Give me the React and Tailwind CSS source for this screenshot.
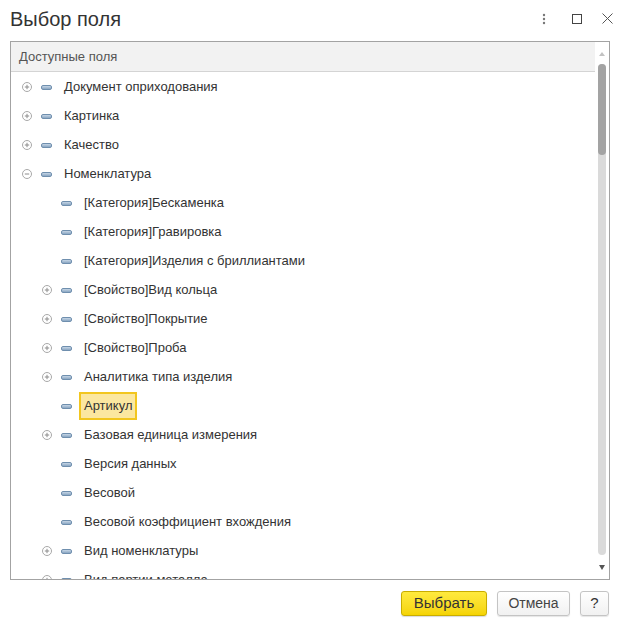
import React from "react";

const rows = [
  { level: 0, label: "Документ оприходования", toggle: "plus" },
  { level: 0, label: "Картинка", toggle: "plus" },
  { level: 0, label: "Качество", toggle: "plus" },
  { level: 0, label: "Номенклатура", toggle: "minus" },
  { level: 1, label: "[Категория]Бескаменка" },
  { level: 1, label: "[Категория]Гравировка" },
  { level: 1, label: "[Категория]Изделия с бриллиантами" },
  { level: 1, label: "[Свойство]Вид кольца", toggle: "plus" },
  { level: 1, label: "[Свойство]Покрытие", toggle: "plus" },
  { level: 1, label: "[Свойство]Проба", toggle: "plus" },
  { level: 1, label: "Аналитика типа изделия", toggle: "plus" },
  { level: 1, label: "Артикул", selected: true },
  { level: 1, label: "Базовая единица измерения", toggle: "plus" },
  { level: 1, label: "Версия данных" },
  { level: 1, label: "Весовой" },
  { level: 1, label: "Весовой коэффициент вхождения" },
  { level: 1, label: "Вид номенклатуры", toggle: "plus" },
  { level: 1, label: "Вид партии металла", toggle: "plus" },
];

const Toggle = ({ kind }) => (
  <svg width="10" height="10" viewBox="0 0 10 10" className="block">
    <circle cx="5" cy="5" r="4.5" fill="white" stroke="#a8a8a8" strokeWidth="1" />
    <line x1="2.8" y1="5" x2="7.2" y2="5" stroke="#8c8c8c" strokeWidth="1" />
    {kind === "plus" && <line x1="5" y1="2.8" x2="5" y2="7.2" stroke="#8c8c8c" strokeWidth="1" />}
  </svg>
);

const FieldIcon = () => (
  <div className="w-[11px] h-[5px] rounded-[2px] border border-[#6f8fae] bg-gradient-to-b from-[#c6d6e6] to-[#8aa6c2]" />
);

const TreeRow = ({ row }) => (
  <div className={`flex items-center h-[29px] shrink-0 pt-[1px] ${row.level === 0 ? "pl-[11px]" : "pl-[31px]"}`}>
    <div className="w-[10px] flex items-center">{row.toggle && <Toggle kind={row.toggle} />}</div>
    <div className="ml-[9px]">
      <FieldIcon />
    </div>
    {row.selected ? (
      <div className="ml-[7px] h-[28px] flex items-center px-[3px] border-2 border-[#f2c61f] bg-[#fbe7a0] text-[13px] text-[#333]">
        {row.label}
      </div>
    ) : (
      <div className="ml-[12px] text-[13px] text-[#333] whitespace-nowrap">{row.label}</div>
    )}
  </div>
);

export default function App() {
  return (
    <div className="w-[625px] h-[627px] bg-white font-['Liberation_Sans',Arial,sans-serif] overflow-hidden">
      {/* Title bar */}
      <div className="flex items-center h-[37px] pl-[10px] pr-[12px]">
        <h1 className="text-[20px] text-[#333] leading-none flex-1">Выбор поля</h1>
        <div className="flex items-center gap-[20px] text-[#555]">
          <svg width="4" height="12" viewBox="0 0 4 12">
            <circle cx="2" cy="2" r="1.2" fill="#777" />
            <circle cx="2" cy="6" r="1.2" fill="#777" />
            <circle cx="2" cy="10" r="1.2" fill="#777" />
          </svg>
          <svg width="10" height="10" viewBox="0 0 10 10" className="ml-[6px]">
            <rect x="0.5" y="0.5" width="9" height="9" fill="none" stroke="#444" strokeWidth="1" />
          </svg>
          <svg width="11" height="11" viewBox="0 0 11 11">
            <path d="M0.5 0.5 L10.5 10.5 M10.5 0.5 L0.5 10.5" stroke="#555" strokeWidth="1" />
          </svg>
        </div>
      </div>

      {/* Tree panel */}
      <div className="ml-[10px] mt-[4px] w-[600px] h-[539px] border border-[#a3a3a3] flex">
        <div className="flex-1 flex flex-col overflow-hidden">
          <div className="h-[30px] shrink-0 bg-[#f2f2f2] border-b border-[#d4d4d4] flex items-center pl-[8px] text-[13px] text-[#555]">
            Доступные поля
          </div>
          <div className="flex flex-col overflow-hidden">
            {rows.map((r, i) => (
              <TreeRow key={i} row={r} />
            ))}
          </div>
        </div>
        {/* Scrollbar */}
        <div className="w-[14px] flex flex-col items-center">
          <div className="h-[22px] flex items-center justify-center pt-[2px]">
            <div className="w-0 h-0 border-l-[3px] border-r-[3px] border-b-[4px] border-l-transparent border-r-transparent border-b-[#c2c2c2]" />
          </div>
          <div className="w-[8px] h-[491px] rounded-[4px] bg-[#dadada] flex flex-col">
            <div className="h-[91px] rounded-[4px] bg-[#a3a3a3]" />
          </div>
          <div className="flex-1 flex items-center justify-center">
            <div className="w-0 h-0 border-l-[3.5px] border-r-[3.5px] border-t-[5px] border-l-transparent border-r-transparent border-t-[#555]" />
          </div>
        </div>
      </div>

      {/* Footer buttons */}
      <div className="flex justify-end gap-[10px] mt-[11px] w-[609px]">
        <button className="h-[25px] w-[86px] rounded-[3px] border border-[#c9ad00] bg-gradient-to-b from-[#ffea3d] to-[#f5d400] text-[15px] text-[#333] shadow-[0_1px_1px_rgba(0,0,0,0.15)]">
          Выбрать
        </button>
        <button className="h-[25px] w-[73px] rounded-[3px] border border-[#c4c4c4] bg-gradient-to-b from-white to-[#f1f1f1] text-[14px] text-[#444] shadow-[0_1px_1px_rgba(0,0,0,0.1)]">
          Отмена
        </button>
        <button className="h-[25px] w-[29px] rounded-[3px] border border-[#c4c4c4] bg-gradient-to-b from-white to-[#f1f1f1] text-[15px] text-[#333] shadow-[0_1px_1px_rgba(0,0,0,0.1)]">
          ?
        </button>
      </div>
    </div>
  );
}
